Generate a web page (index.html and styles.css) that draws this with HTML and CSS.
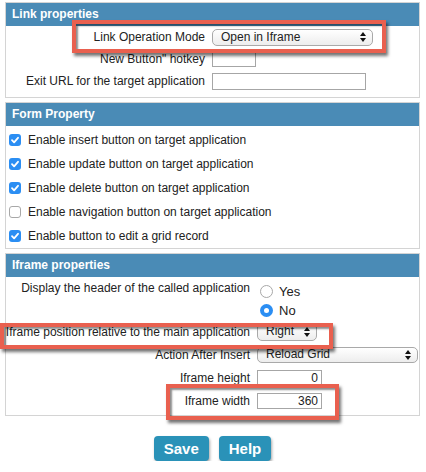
FILE: index.html
```html
<!DOCTYPE html>
<html lang="en">
<head>
  <meta charset="UTF-8">
  <title>Application link settings</title>
  <link rel="stylesheet" href="styles.css">
</head>
<body>
  <!-- Link properties -->
  <div class="panel">
    <div class="panel-head">Link properties</div>
    <div class="panel-body grid grid-link">
      <label class="lbl">Link Operation Mode</label>
      <div class="field">
        <div class="select sel-mode">Open in Iframe<svg class="arrows" width="6" height="10" viewBox="0 0 6 10"><path d="M0 4L3 0L6 4Z M0 6L3 10L6 6Z" fill="#111"/></svg></div>
      </div>
      <label class="lbl">New Button" hotkey</label>
      <div class="field"><div class="input in-hotkey"></div></div>
      <label class="lbl">Exit URL for the target application</label>
      <div class="field"><div class="input in-url"></div></div>
    </div>
  </div>

  <!-- Form Property -->
  <div class="panel">
    <div class="panel-head">Form Property</div>
    <div class="panel-body checks">
      <div class="check-row"><span class="check on"><svg width="12" height="12" viewBox="0 0 12 12"><path d="M3 6.2L5.1 8.3L9 3.8" fill="none" stroke="#fff" stroke-width="1.8" stroke-linecap="round" stroke-linejoin="round"/></svg></span>Enable insert button on target application</div>
      <div class="check-row"><span class="check on"><svg width="12" height="12" viewBox="0 0 12 12"><path d="M3 6.2L5.1 8.3L9 3.8" fill="none" stroke="#fff" stroke-width="1.8" stroke-linecap="round" stroke-linejoin="round"/></svg></span>Enable update button on target application</div>
      <div class="check-row"><span class="check on"><svg width="12" height="12" viewBox="0 0 12 12"><path d="M3 6.2L5.1 8.3L9 3.8" fill="none" stroke="#fff" stroke-width="1.8" stroke-linecap="round" stroke-linejoin="round"/></svg></span>Enable delete button on target application</div>
      <div class="check-row"><span class="check"></span>Enable navigation button on target application</div>
      <div class="check-row"><span class="check on"><svg width="12" height="12" viewBox="0 0 12 12"><path d="M3 6.2L5.1 8.3L9 3.8" fill="none" stroke="#fff" stroke-width="1.8" stroke-linecap="round" stroke-linejoin="round"/></svg></span>Enable button to edit a grid record</div>
    </div>
  </div>

  <!-- Iframe properties -->
  <div class="panel">
    <div class="panel-head">Iframe properties</div>
    <div class="panel-body grid grid-iframe">
      <label class="lbl lbl-top">Display the header of the called application</label>
      <div class="radios">
        <div class="radio-row"><span class="radio"></span>Yes</div>
        <div class="radio-row"><span class="radio on"></span>No</div>
      </div>
      <label class="lbl row23">Iframe position relative to the main application</label>
      <div class="field row23">
        <div class="select sel-pos">Right<svg class="arrows" width="6" height="10" viewBox="0 0 6 10"><path d="M0 4L3 0L6 4Z M0 6L3 10L6 6Z" fill="#111"/></svg></div>
      </div>
      <label class="lbl row23">Action After Insert</label>
      <div class="field row23">
        <div class="select sel-action">Reload Grid<svg class="arrows" width="6" height="10" viewBox="0 0 6 10"><path d="M0 4L3 0L6 4Z M0 6L3 10L6 6Z" fill="#111"/></svg></div>
      </div>
      <label class="lbl row23">Iframe height</label>
      <div class="field row23"><div class="input in-num">0</div></div>
      <label class="lbl row23">Iframe width</label>
      <div class="field row23"><div class="input in-num">360</div></div>
    </div>
  </div>

  <div class="actions">
    <button class="btn">Save</button>
    <button class="btn">Help</button>
  </div>

  <!-- highlight callouts -->
  <div class="callout callout-mode"></div>
  <div class="callout callout-pos"></div>
  <div class="callout callout-width"></div>
</body>
</html>
```

FILE: styles.css
```css
body {
  margin: 0;
  padding: 2px 5px 0;
  width: 415px;
  position: relative;
  font-family: "Liberation Sans", Arial, sans-serif;
  font-size: 12px;
  color: #222;
  background: #fff;
}
.panel {
  border: 1px solid #d4d4d4;
  margin-bottom: 4px;
}
.panel-head {
  background-color: #4a8bb6;
  color: #fff;
  font-weight: bold;
  height: 23px;
  line-height: 22px;
  padding-left: 6px;
}
.grid {
  display: grid;
  column-gap: 7px;
  align-items: center;
}
.grid-link {
  grid-template-columns: 199px 1fr;
  grid-auto-rows: 22px;
  padding-bottom: 5px;
}
.grid-iframe {
  grid-template-columns: 244px 1fr;
  padding-top: 3px;
  padding-bottom: 3px;
}
.row23 {
  height: 23px;
  display: flex;
  align-items: center;
}
.lbl {
  text-align: right;
  white-space: nowrap;
}
.lbl.row23 {
  justify-content: flex-end;
}
.lbl-top {
  align-self: start;
  line-height: 17px;
}
.field {
  display: flex;
  align-items: center;
}
.select {
  box-sizing: border-box;
  height: 17px;
  border: 1px solid #a9a9a9;
  border-radius: 5px;
  background: linear-gradient(#ffffff, #ededed);
  padding: 0 6px 0 8px;
  display: flex;
  align-items: center;
  justify-content: space-between;
  line-height: 15px;
}
.sel-mode { width: 161px; }
.sel-pos { width: 60px; height: 18px; }
.sel-action { width: 161px; height: 16px; }
.arrows { flex: none; }
.input {
  box-sizing: border-box;
  border: 1px solid #a6a6a6;
  background: #fff;
  height: 17px;
  line-height: 15px;
  text-align: right;
  padding-right: 3px;
}
.in-hotkey { width: 44px; height: 15px; }
.in-url { width: 154px; }
.in-num { width: 65px; height: 16px; }
.checks {
  padding-top: 2px;
}
.check-row {
  height: 24px;
  display: flex;
  align-items: center;
  padding-left: 3px;
}
.check {
  box-sizing: border-box;
  width: 12px;
  height: 12px;
  border-radius: 3px;
  border: 1px solid #a8a8a8;
  background: #fff;
  margin-right: 7px;
  display: flex;
}
.check.on {
  border: none;
  background: #2b8ef3;
}
.radios {
  padding-left: 3px;
}
.radio-row {
  height: 19px;
  display: flex;
  align-items: center;
  font-size: 13px;
}
.radio-row:first-child {
  padding-top: 2px;
}
.radio {
  box-sizing: border-box;
  width: 13px;
  height: 13px;
  border-radius: 50%;
  border: 1px solid #a8a8a8;
  background: #fff;
  margin-right: 6px;
  position: relative;
}
.radio.on {
  border: none;
  background: #2b8ef3;
}
.radio.on::after {
  content: "";
  position: absolute;
  left: 4px;
  top: 4px;
  width: 5px;
  height: 5px;
  border-radius: 50%;
  background: #fff;
}
.actions {
  display: flex;
  justify-content: center;
  gap: 10px;
  margin-top: 20px;
}
.btn {
  background-color: #2a92b8;
  color: #fff;
  border: none;
  border-radius: 4px;
  height: 25px;
  padding: 0 10px;
  font-family: "Liberation Sans", Arial, sans-serif;
  font-size: 15px;
  font-weight: bold;
  box-shadow: 1px 2px 3px rgba(0, 0, 0, 0.35);
}
.callout {
  position: absolute;
  box-sizing: border-box;
  border: 4px solid #e9604f;
  box-shadow: 2px 3px 3px rgba(0, 0, 0, 0.55), inset 2px 2px 2px rgba(0, 0, 0, 0.45);
}
.callout-mode {
  left: 72px;
  top: 20px;
  width: 314px;
  height: 33px;
}
.callout-pos {
  left: 0;
  top: 323px;
  width: 333px;
  height: 26px;
}
.callout-width {
  left: 166px;
  top: 384px;
  width: 173px;
  height: 36px;
}
```
